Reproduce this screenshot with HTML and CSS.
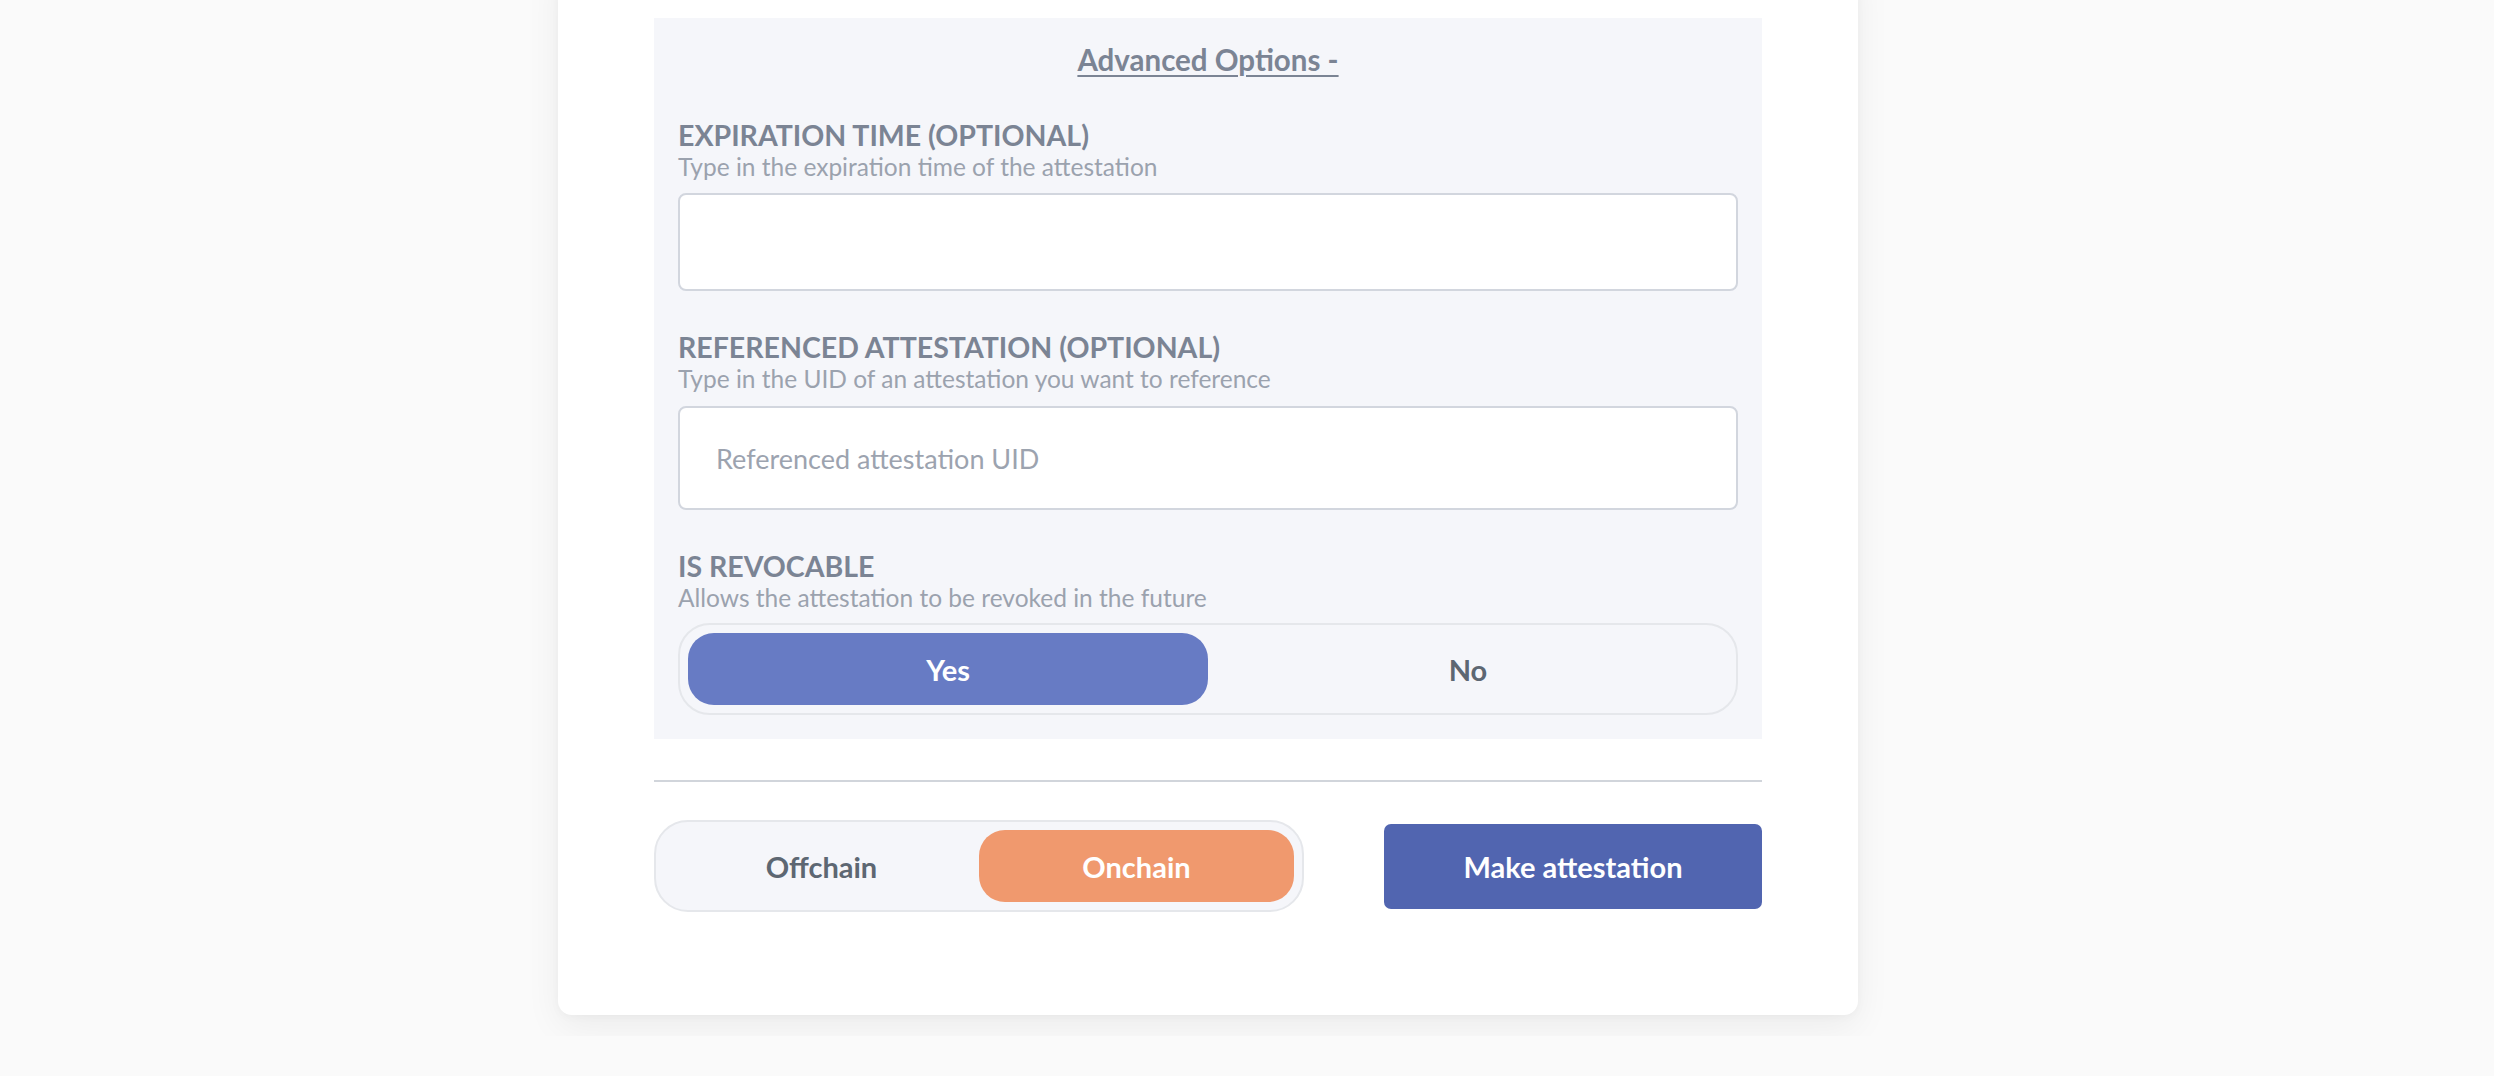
FILE: index.html
```html
<!DOCTYPE html>
<html lang="en">
<head>
<meta charset="utf-8">
<title>Make attestation</title>
<link rel="stylesheet" href="styles.css">
</head>
<body>
<div class="page">
  <div class="card">
    <section class="advanced">
      <div class="adv-title"><span class="adv-link">Advanced Options -</span></div>

      <div class="field first">
        <div class="label">EXPIRATION TIME (OPTIONAL)</div>
        <div class="sub">Type in the expiration time of the attestation</div>
        <input class="input input-short" type="text" value="">
      </div>

      <div class="field">
        <div class="label">REFERENCED ATTESTATION (OPTIONAL)</div>
        <div class="sub">Type in the UID of an attestation you want to reference</div>
        <input class="input input-tall" type="text" placeholder="Referenced attestation UID">
      </div>

      <div class="field">
        <div class="label">IS REVOCABLE</div>
        <div class="sub">Allows the attestation to be revoked in the future</div>
        <div class="toggle revocable">
          <div class="opt active-blue">Yes</div>
          <div class="opt">No</div>
        </div>
      </div>
    </section>

    <hr class="divider">

    <div class="bottom-row">
      <div class="toggle chain">
        <div class="opt">Offchain</div>
        <div class="opt active-orange">Onchain</div>
      </div>
      <button class="make-btn" type="button">Make attestation</button>
    </div>
  </div>
</div>
</body>
</html>
```

FILE: styles.css
```css
* { box-sizing: border-box; }

html, body {
  margin: 0;
  padding: 0;
  background: #fafafa;
  font-family: "Lato", "Noto Sans", "Liberation Sans", sans-serif;
  overflow: hidden;
}

.page {
  height: 1076px;
  padding-left: 558px;
}

.card {
  width: 1300px;
  margin-top: -40px;
  padding: 58px 96px 103px;
  background: #ffffff;
  border-radius: 14px;
  box-shadow: 0 12px 36px rgba(0, 0, 0, 0.06), 0 2px 10px rgba(0, 0, 0, 0.03);
}

.advanced {
  background: #f5f6fa;
  padding: 24px 24px 24px;
}

.adv-title {
  text-align: center;
  line-height: 36px;
  height: 36px;
}

.adv-link {
  font-size: 29.5px;
  font-weight: 700;
  color: #7b8494;
  text-decoration: underline;
  text-underline-offset: 4px;
  text-decoration-thickness: 2px;
}

.field { margin-top: 40px; }
.field.first { margin-top: 41px; }

.label {
  font-size: 28.5px;
  font-weight: 700;
  color: #7b8494;
  line-height: 32px;
}

.sub {
  margin-top: 2px;
  font-size: 24.5px;
  color: #9ba2ae;
  line-height: 28px;
}

.input {
  display: block;
  width: 100%;
  margin-top: 12px;
  border: 2px solid #d2d6de;
  border-radius: 8px;
  background: #ffffff;
  padding: 0 36px;
  font-family: inherit;
  font-size: 27px;
  color: #4b5563;
  outline: none;
}

.input::placeholder { color: #9ca3af; }

.input-short { height: 98px; }
.input-tall { height: 104px; margin-top: 13px; }

.toggle {
  display: grid;
  grid-template-columns: 1fr 1fr;
  border: 2px solid #e5e7eb;
  border-radius: 32px;
  padding: 8px;
  background: #f5f6fa;
}

.revocable {
  margin-top: 11px;
  height: 92px;
}

.opt {
  display: flex;
  align-items: center;
  justify-content: center;
  border-radius: 26px;
  font-size: 29px;
  font-weight: 700;
  color: #5d6772;
}

.active-blue {
  background: #677bc4;
  color: #ffffff;
}

.active-orange {
  background: #f0996e;
  color: #ffffff;
}

.divider {
  margin: 41px 0 0;
  border: 0;
  height: 2px;
  background: #d1d5db;
}

.bottom-row {
  margin-top: 38px;
  display: flex;
  align-items: center;
  justify-content: space-between;
}

.chain {
  width: 650px;
  height: 92px;
  border-radius: 34px;
}

.make-btn {
  width: 378px;
  height: 85px;
  border: 0;
  border-radius: 7px;
  background: #5165b0;
  color: #ffffff;
  font-family: inherit;
  font-size: 29px;
  font-weight: 700;
  cursor: pointer;
}
```
